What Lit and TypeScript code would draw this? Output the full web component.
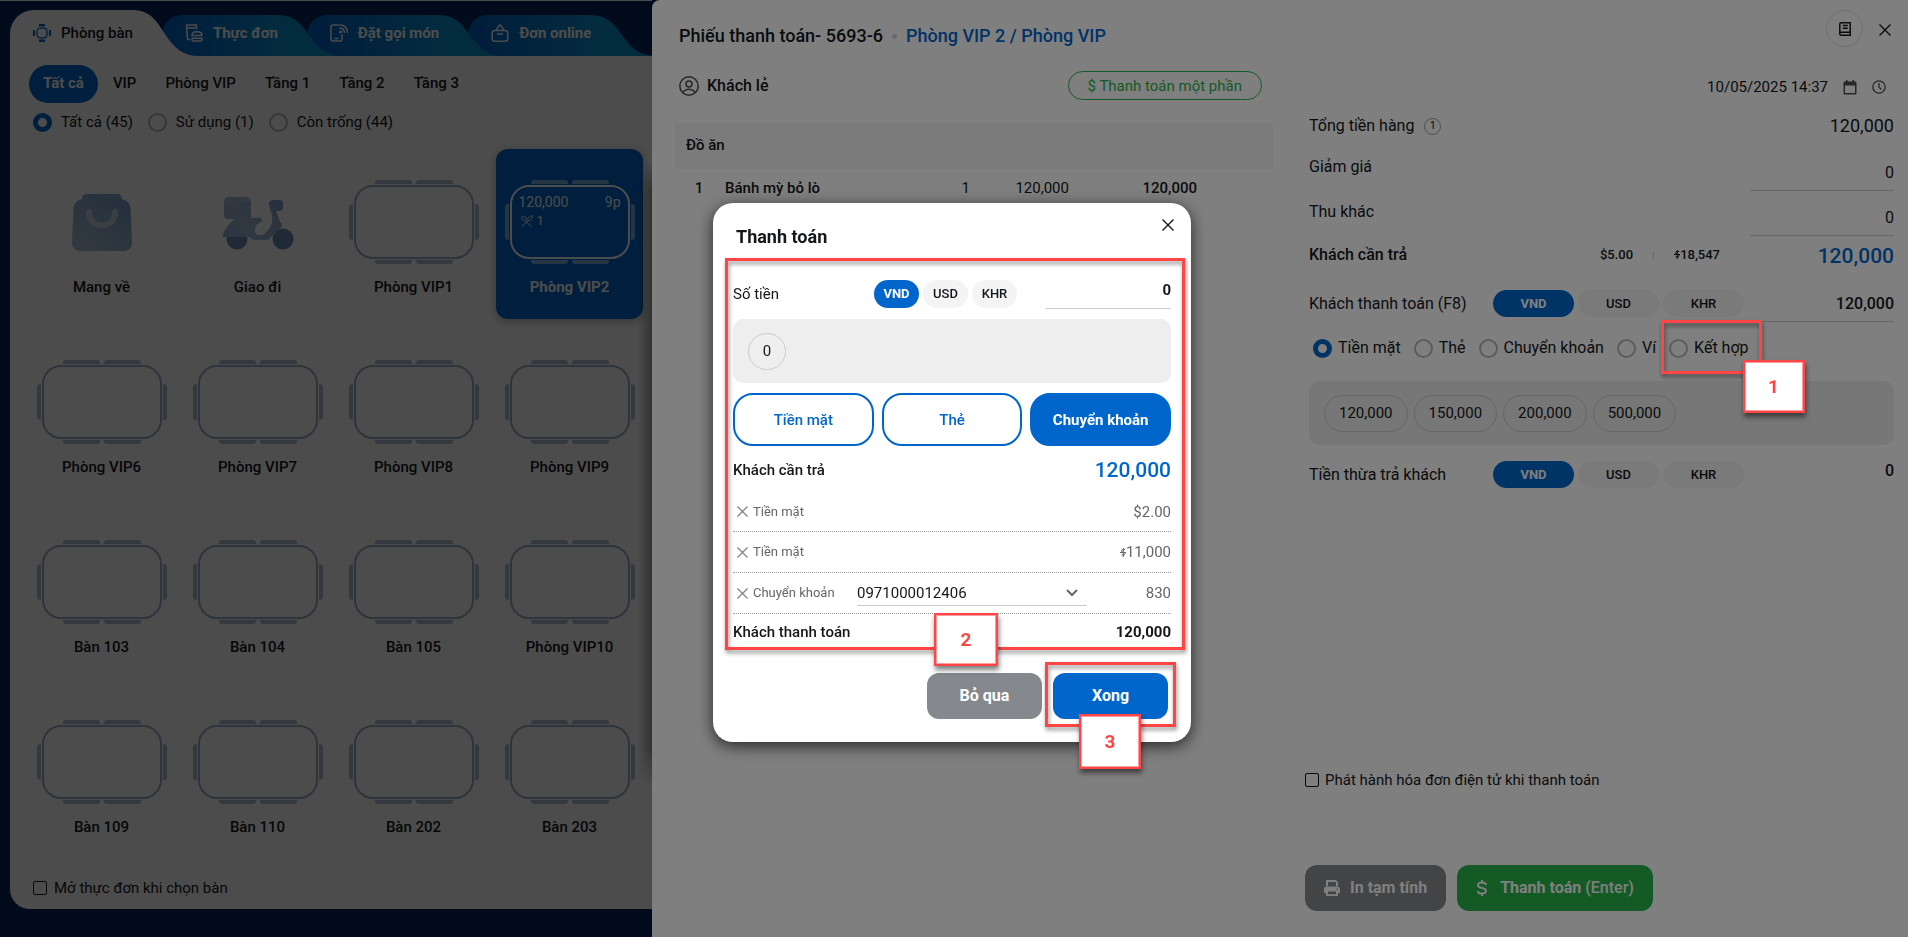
import { LitElement, html, css, svg, nothing } from "lit";
import { customElement, property, state } from "lit/decorators.js";
import { classMap } from "lit/directives/class-map.js";

const reset = css`
  *,
  *::before,
  *::after {
    box-sizing: border-box;
  }
  button,
  input,
  select {
    font: inherit;
    color: inherit;
    margin: 0;
    padding: 0;
    border: 0;
    background: none;
    border-radius: 0;
    outline: none;
  }
  button {
    cursor: pointer;
  }
  svg {
    display: block;
    flex: none;
  }
`;

const closeIcon = (size: number, stroke = 1.4) => html`
  <svg width=${size} height=${size} viewBox="0 0 12 12" fill="none" stroke="currentColor" stroke-width=${stroke}>
    <path d="M.5 .5 11.5 11.5M11.5 .5 .5 11.5" />
  </svg>
`;

const tabIcons = {
  tables: svg`<g fill="#0066cc" stroke="none"><rect x="6" y="0" width="6" height="2.500"/><rect x="6" y="15.500" width="6" height="2.500"/><rect x="0" y="6" width="2" height="6"/><rect x="16" y="6" width="2" height="6"/></g><rect x="4" y="4.100" width="10" height="9.800" rx="3.400" stroke="#0066cc" stroke-width="1.300"/>`,
  menu: svg`<path d="M4.500 15.500H2.600L1.500 4V1h10v3.500M1.500 4h8.500" /><path d="M7 11.500c0-2.500 2-3.700 5-3.700s5 1.200 5 3.700zM6.800 14.200h10.400M7 14.200v1.300c0 1 .8 1.500 1.800 1.500h6.400c1 0 1.800-.5 1.800-1.500v-1.300"/>`,
  order: svg`<path d="M8.500 1H3C1.900 1 1 1.900 1 3v12c0 1.100.9 2 2 2h7c1.100 0 2-.9 2-2v-4M5 14.500h3"/><path d="M10 1c4.400 0 7.500 3.200 7.500 7.500M10 4.200c2.600 0 4.300 1.700 4.300 4.300"/><circle cx="10.500" cy="8" r=".8"/>`,
  online: svg`<rect x="1.200" y="6.500" width="15.600" height="10.700" rx="2.500"/><path d="M5 6.500 8.200 1.500c.4-.6 1.200-.6 1.600 0L13 6.500M6.500 10h5"/>`,
};

@customElement("currency-switch")
export class CurrencySwitch extends LitElement {
  @property({ type: Boolean, reflect: true }) compact = false;
  @state() private selected = "VND";

  static styles = [
    reset,
    css`
      :host {
        display: flex;
        gap: 4px;
      }
      .unit {
        width: 81px;
        height: 27px;
        border-radius: 14px;
        background: #f4f4f4;
        color: #15171a;
        font-size: 13px;
        font-weight: 500;
        line-height: 20px;
      }
      :host([compact]) .unit {
        width: 45px;
        height: 28px;
      }
      .on {
        background: #0066cc;
        color: #fff;
        font-weight: 700;
      }
    `,
  ];

  render() {
    return ["VND", "USD", "KHR"].map(
      (unit) => html`<button
        type="button"
        class=${classMap({ unit: true, on: unit === this.selected })}
        @click=${() => (this.selected = unit)}
      >${unit}</button>`,
    );
  }
}

@customElement("table-tile")
export class TableTile extends LitElement {
  @property() name = "";
  @property() kind = "table";
  @property() amount = "";
  @property() time = "";
  @property() dishes = "";
  @property({ type: Boolean, reflect: true }) selected = false;

  static styles = [
    reset,
    css`
      :host {
        display: block;
      }
      .tile {
        display: flex;
        flex-direction: column;
        align-items: center;
        gap: 12px;
        width: 100%;
        height: 170px;
        padding-top: 31px;
        border-radius: 12px;
        font-weight: 500;
        line-height: 20px;
      }
      .seat {
        display: grid;
        width: 130px;
        height: 85px;
      }
      .seat > * {
        grid-area: 1 / 1;
      }
      .art {
        place-self: center;
      }
      .frame {
        stroke: #97adc8;
      }
      .chairs {
        fill: #adc0d6;
      }
      .info {
        display: grid;
        grid-template-columns: 1fr auto;
        align-content: start;
        padding: 12px 14px 0 14px;
        font-size: 14px;
        font-weight: 400;
        line-height: 20px;
        text-align: left;
      }
      .dishes {
        display: flex;
        align-items: center;
        gap: 4px;
        padding-left: 2px;
        font-size: 13px;
        line-height: 18px;
      }
      :host([selected]) .tile {
        background: #0066cc;
        color: #fff;
        box-shadow: 0 2px 10px rgba(0, 0, 0, 0.3);
        font-weight: 700;
      }
      :host([selected]) .frame {
        stroke: #fff;
      }
      :host([selected]) .chairs {
        fill: #7fb2e5;
      }
    `,
  ];

  private seat() {
    return html`<svg width="130" height="85" viewBox="0 0 130 85">
      <rect class="frame" x="6" y="6" width="118" height="72" rx="18" fill="none" stroke-width="2" />
      <path
        class="chairs"
        d="M26 4V3c0-2 1-3 3-3h31c2 0 3 1 3 3v1zM67 4V3c0-2 1-3 3-3h31c2 0 3 1 3 3v1zM26 80v1c0 2 1 3 3 3h31c2 0 3-1 3-3v-1zM67 80v1c0 2 1 3 3 3h31c2 0 3-1 3-3v-1zM4 24H3c-2 0-3 1-3 3v30c0 2 1 3 3 3h1zM126 24h1c2 0 3 1 3 3v30c0 2-1 3-3 3h-1z"
      />
    </svg>`;
  }

  private bag() {
    return html`<svg class="art" width="62" height="60" viewBox="0 0 62 60">
      <defs>
        <linearGradient id="bag" x1="0.3" y1="1" x2="1" y2="0.2">
          <stop offset="0" stop-color="#a5bddb" />
          <stop offset="1" stop-color="#7fa2c9" />
        </linearGradient>
      </defs>
      <path d="M11 9V6c0-4 2-5 5-5h30c3 0 5 2 5 5v3z" fill="#87aad2" />
      <path d="M13 6h36c6 0 10 4 10.500 9L61 49c.3 5-3 9-8 9H9c-5 0-8.300-4-8-9l1.500-34C3 10 7 6 13 6z" fill="url(#bag)" />
      <path d="M18 19c0 18 26 18 26 0" fill="none" stroke="#c3d2e2" stroke-width="6" stroke-linecap="round" />
    </svg>`;
  }

  private scooter() {
    return html`<svg class="art" width="72" height="54" viewBox="0 0 72 54">
      <defs>
        <linearGradient id="box" x1="0" y1="0.8" x2="1" y2="0.3">
          <stop offset="0" stop-color="#8fb0d8" />
          <stop offset="0.4" stop-color="#a3bbd9" />
          <stop offset="1" stop-color="#82a4cc" />
        </linearGradient>
      </defs>
      <circle cx="15" cy="43" r="10.500" fill="#6b8db5" />
      <circle cx="61" cy="43" r="10.500" fill="#6b8db5" />
      <path d="M2 7c0-4 2-6 5-6h17c3 0 5 2 5 6z" fill="#abc0db" />
      <path d="M2 6h27v16h9c2 0 3 3 1 4-5 2-6 5-6 8 0 4 2 5 4 5h4c8-6 10-12 9-20l-3-10c-1-3 2-5 5-5h6c2 0 3 1 3 3v5c0 2-2 3-4 3h-3l4 11c3 1 2 5 0 6L46 44H32c-2 0-3-3-5-3H1c-1-5 8-16 12-18H6c-3 0-4-2-4-4z" fill="url(#box)" />
    </svg>`;
  }

  render() {
    const art = this.kind === "bag" ? this.bag() : this.kind === "scooter" ? this.scooter() : this.seat();
    return html`<button type="button" class="tile">
      <span class="seat">
        ${art}
        ${this.amount
          ? html`<span class="info">
              <span>${this.amount}</span><span>${this.time}</span>
              <span class="dishes">
                <svg width="12" height="12" viewBox="0 0 12 12" fill="none" stroke="currentColor" stroke-width="1">
                  <path d="M1 1v2.500C1 5 2.500 5.500 3.500 5.500L10.500 11.500M2.500.8 4.500 3.200M1 11.500 7 5.500M7 5.500C6 3 8.500.8 11.300.8 11.500 3.500 9.500 6.500 7 5.500zM4.500 3.200 5.500 5" />
                </svg>
                ${this.dishes}
              </span>
            </span>`
          : nothing}
      </span>
      <span>${this.name}</span>
    </button>`;
  }
}

@customElement("app-root")
export class AppRoot extends LitElement {
  static styles = [
    reset,
    css`
      :host {
        display: block;
        font-family: Roboto, "Noto Sans", sans-serif;
        font-size: 15px;
        line-height: 20px;
        color: #15171a;
      }
      .page {
        display: grid;
        grid-template-columns: 652fr 1256fr;
        min-height: 100vh;
        background: #08275c;
      }

      /* room picker */
      .rooms {
        position: relative;
        isolation: isolate;
        display: flex;
        flex-direction: column;
        min-width: 0;
        padding: 9px 0 28px 10px;
        border-top: 1px solid #fff;
        overflow: hidden;
      }
      .tabs {
        display: flex;
        align-items: flex-end;
        height: 46px;
      }
      .tab {
        display: flex;
        height: 41px;
        margin-left: -37px;
        color: #fff;
        font-weight: 700;
      }
      .tab:first-child {
        height: 46px;
        margin-left: 0;
        color: #15171a;
        font-weight: 500;
      }
      .tab-body {
        display: flex;
        align-items: center;
        gap: 10px;
        height: 100%;
        padding: 0 0 5px 23px;
        border-radius: 20px 0 0 0;
        background: linear-gradient(90deg, #0061c4, #0c8fd0);
        white-space: nowrap;
      }
      .tab:first-child .tab-body {
        padding-bottom: 0;
        background: #fff;
        border-radius: 24px 0 0 0;
      }
      .tail {
        height: 100%;
        width: 66px;
        fill: #0c8fd0;
      }
      .tab:first-child .tail {
        fill: #fff;
      }
      .tab:nth-child(1) {
        z-index: 4;
      }
      .tab:nth-child(2) {
        z-index: 3;
      }
      .tab:nth-child(3) {
        z-index: 2;
      }
      .sheet {
        display: flex;
        flex: 1;
        flex-direction: column;
        padding: 9px 9px 0 18px;
        border-radius: 0 0 0 20px;
        background: #fff;
      }
      .areas {
        display: flex;
        gap: 1px;
        padding-left: 1px;
      }
      .area {
        height: 38px;
        padding: 0 14px 3px;
        border-radius: 19px;
        font-weight: 500;
      }
      .area.on {
        background: #0066cc;
        color: #fff;
        font-weight: 700;
      }
      .status {
        display: flex;
        gap: 15px;
        padding: 9px 5px 17px;
      }
      .status label {
        display: flex;
        align-items: center;
        gap: 9px;
      }
      .tiles {
        display: grid;
        grid-template-columns: repeat(4, 1fr);
        gap: 10px 9px;
      }
      .open-menu {
        display: flex;
        align-items: center;
        gap: 7px;
        margin-top: auto;
        padding: 18px 5px 11px;
      }
      .edge {
        position: absolute;
        top: 160px;
        right: 0;
        bottom: 150px;
        width: 14px;
        background: linear-gradient(90deg, transparent, rgba(0, 0, 0, 0.35));
        -webkit-mask: linear-gradient(transparent, #000 30px, #000 calc(100% - 40px), transparent);
        mask: linear-gradient(transparent, #000 30px, #000 calc(100% - 40px), transparent);
      }

      .radio {
        appearance: none;
        flex: none;
        width: 19px;
        height: 19px;
        border: 2px solid #b8b8b8;
        border-radius: 50%;
      }
      .radio:checked {
        border: 5px solid #0066cc;
      }
      .check {
        appearance: none;
        flex: none;
        width: 14px;
        height: 14px;
        border: 1px solid #15171a;
        border-radius: 2px;
      }

      .backdrop {
        position: fixed;
        inset: 0;
        background: rgba(0, 0, 0, 0.4);
      }

      /* payment drawer */
      .drawer {
        position: relative;
        display: flex;
        flex-direction: column;
        min-width: 0;
        padding: 10px 14px 26px 23px;
        border-radius: 8px 0 0 0;
        background: #fff;
      }
      .drawer-head {
        display: flex;
        align-items: flex-start;
        height: 37px;
        padding-left: 4px;
      }
      .drawer-title {
        display: flex;
        align-items: center;
        gap: 9px;
        margin: 0 auto 0 0;
        padding-top: 14px;
        font-size: 18px;
        font-weight: 500;
        line-height: 24px;
      }
      .drawer-title .dot {
        width: 5px;
        height: 5px;
        border-radius: 50%;
        background: #d0d0d0;
      }
      .blue {
        color: #0066cc;
      }
      .round {
        display: grid;
        place-items: center;
        width: 37px;
        height: 37px;
        border: 1px solid #e0e0e0;
        border-radius: 50%;
      }
      .drawer-close {
        display: grid;
        place-items: center;
        width: 44px;
        height: 40px;
        margin-right: -13px;
      }
      .drawer-body {
        display: grid;
        flex: 1;
        grid-template-columns: 598fr 589fr;
        gap: 32px;
        padding-top: 24px;
      }
      .customer {
        display: flex;
        align-items: center;
        gap: 8px;
        height: 29px;
        padding: 0 11px 0 4px;
        font-size: 16px;
        font-weight: 500;
      }
      .customer svg {
        color: #4b4e52;
      }
      .partial {
        height: 29px;
        margin-left: auto;
        padding: 0 19px;
        border: 1px solid #28b44b;
        border-radius: 15px;
        color: #28b44b;
        font-size: 15px;
        font-weight: 400;
      }
      .bill {
        width: 100%;
        margin-top: 23px;
        border-collapse: collapse;
        table-layout: fixed;
      }
      .bill th,
      .bill td {
        padding: 0;
        text-align: right;
        font-weight: 400;
      }
      .bill .group {
        height: 46px;
        padding: 0 11px 2px;
        background: #f6f6f6;
        text-align: left;
        font-weight: 500;
      }
      .bill .line td {
        height: 38px;
      }
      .bill .no {
        padding-right: 2px;
        text-align: center;
        font-weight: 500;
      }
      .bill .dish {
        text-align: left;
        font-weight: 500;
      }
      .bill .sum {
        font-weight: 500;
      }
      .c-no {
        width: 50px;
      }
      .c-qty {
        width: 60px;
      }
      .c-price {
        width: 99px;
      }
      .c-sum {
        width: 128px;
      }
      .c-end {
        width: 76px;
      }

      .summary {
        display: flex;
        flex-direction: column;
        font-size: 16px;
      }
      .rows {
        padding-left: 4px;
      }
      .date {
        display: flex;
        align-items: center;
        justify-content: flex-end;
        gap: 15px;
        height: 32px;
        padding-right: 8px;
        font-size: 15px;
      }
      .date input {
        width: 122px;
        text-align: right;
      }
      .date svg {
        color: #4b4e52;
      }
      .row {
        display: flex;
        align-items: flex-start;
        height: 45px;
      }
      .row > label,
      .row > .label {
        margin-right: auto;
        line-height: 42px;
      }
      .row .field {
        width: 144px;
        height: 45px;
        padding-top: 8px;
        border-bottom: 1px solid #ccc;
        text-align: right;
      }
      .row.total {
        height: 43px;
        padding-top: 3px;
        align-items: center;
      }
      .row.total .label {
        display: flex;
        align-items: center;
        gap: 10px;
        line-height: 20px;
      }
      .count {
        display: grid;
        place-items: center;
        width: 17px;
        height: 17px;
        border: 1px solid #999;
        border-radius: 50%;
        font-size: 11px;
        line-height: 12px;
      }
      .row.total output {
        font-size: 18px;
      }
      .row.due {
        height: 41px;
      }
      .row.due .label {
        line-height: 38px;
        font-weight: 500;
      }
      .foreign {
        display: flex;
        align-items: center;
        gap: 20px;
        margin-right: 30px;
        font-size: 13px;
        font-weight: 500;
        line-height: 38px;
      }
      .foreign .bar {
        width: 1px;
        height: 7px;
        background: #ccc;
      }
      .row.due .blue {
        width: 144px;
        line-height: 41px;
        text-align: right;
      }
      .big {
        font-size: 21px;
        font-weight: 500;
        line-height: 24px;
      }
      .row.pay > label,
      .row.change > label {
        width: 184px;
        margin-right: 0;
      }
      .row.pay > label {
        line-height: 53px;
      }
      .row.pay currency-switch {
        padding-top: 13px;
      }
      .row.pay .field {
        margin-left: auto;
        font-weight: 500;
      }
      .methods {
        display: flex;
        align-items: center;
        gap: 13px;
        height: 52px;
        padding-left: 4px;
      }
      .methods label {
        position: relative;
        display: flex;
        align-items: center;
        gap: 6px;
        white-space: nowrap;
      }
      .quick {
        display: flex;
        align-items: center;
        gap: 6px;
        height: 64px;
        margin-top: 7px;
        padding: 0 15px;
        border-radius: 10px;
        background: #eee;
        font-size: 15px;
      }
      .quick button {
        min-width: 38px;
        height: 37px;
        padding: 0 14px;
        border: 1px solid #ccc;
        border-radius: 19px;
      }
      .row.change {
        margin-top: 16px;
      }
      .row.change > label {
        line-height: 27px;
      }
      .row.change .zero {
        margin-left: auto;
        font-weight: 500;
      }
      .einvoice {
        display: flex;
        align-items: center;
        gap: 6px;
        margin-top: auto;
        margin-bottom: 75px;
        font-size: 15px;
      }
      .actions {
        display: flex;
        gap: 11px;
      }
      .btn {
        display: flex;
        align-items: center;
        justify-content: center;
        gap: 10px;
        height: 46px;
        padding: 0 19px;
        border-radius: 12px;
        background: #85888c;
        color: #fff;
        font-size: 16px;
        font-weight: 700;
      }
      .btn.go {
        gap: 12px;
        background: #28b44b;
      }
      .btn .key {
        font-weight: 500;
      }
      .riel {
        display: inline-block;
        width: 6px;
        height: 9px;
      }

      /* combined payment dialog */
      .layer {
        position: fixed;
        inset: 0;
        z-index: 10;
        display: grid;
        place-items: center;
        padding: 8px 4px 0 0;
        background: rgba(0, 0, 0, 0.5);
      }
      .dialog {
        width: min(478px, 100%);
        padding: 16px 20px 23px;
        border-radius: 20px;
        background: #fff;
        box-shadow: 0 4px 16px rgba(0, 0, 0, 0.7);
      }
      .dialog-head {
        display: flex;
        align-items: flex-start;
        justify-content: space-between;
        height: 44px;
        padding-left: 3px;
      }
      .dialog-head h2 {
        margin: 0;
        padding-top: 6px;
        font-size: 18px;
        font-weight: 700;
        line-height: 24px;
      }
      .dialog-head button {
        padding-left: 8px;
        margin-right: -3px;
      }
      .split {
        position: relative;
        padding-top: 17px;
      }
      .line-amount {
        display: flex;
        align-items: flex-start;
      }
      .line-amount label {
        width: 141px;
        line-height: 28px;
      }
      .line-amount .field {
        width: 125px;
        height: 29px;
        margin-left: auto;
        padding-bottom: 8px;
        border-bottom: 1px solid #ccc;
        text-align: right;
        font-weight: 700;
      }
      .split .quick {
        margin-top: 10px;
      }
      .split .quick button {
        padding: 0;
      }
      .ways {
        display: grid;
        grid-template-columns: repeat(3, 1fr);
        gap: 8px;
        margin-top: 10px;
      }
      .way {
        height: 53px;
        border: 2px solid #0066cc;
        border-radius: 20px;
        color: #0066cc;
        font-weight: 500;
      }
      .way.on {
        background: #0066cc;
        color: #fff;
        font-weight: 700;
      }
      .pair {
        display: flex;
        align-items: center;
        justify-content: space-between;
        font-weight: 500;
      }
      .pair.need {
        height: 46px;
        padding-top: 2px;
      }
      .pair.paid {
        height: 35px;
      }
      .pair strong {
        font-weight: 700;
      }
      .entry {
        display: grid;
        grid-template-columns: 124px 230px 1fr;
        align-items: center;
        height: 40px;
        border-bottom: 1px dotted #999;
        color: #63666a;
      }
      .entry + .entry {
        height: 41px;
      }
      .entry output {
        grid-column: 3;
        text-align: right;
      }
      .entry .what {
        display: flex;
        align-items: center;
        gap: 5px;
        padding-left: 4px;
        font-size: 13px;
        white-space: nowrap;
      }
      .entry .what button {
        color: #85888c;
      }
      .account {
        display: grid;
        align-items: center;
        height: 25px;
        border-bottom: 1px solid #ccc;
        color: #15171a;
      }
      .account > * {
        grid-area: 1 / 1;
      }
      .account select {
        appearance: none;
        width: 100%;
        height: 24px;
      }
      .account svg {
        justify-self: end;
        margin-right: 9px;
        color: #63666a;
        pointer-events: none;
      }
      .dialog-foot {
        display: flex;
        justify-content: flex-end;
        gap: 11px;
        padding: 24px 3px 0 0;
      }
      .dialog-foot .btn {
        width: 115px;
      }
      .anchor {
        position: relative;
      }
      .btn.done {
        background: #0066cc;
      }

      /* step markers */
      .frame-mark {
        position: absolute;
        z-index: 20;
        border: 3px solid #ff4545;
        filter: drop-shadow(1px 3px 2px rgba(0, 0, 0, 0.45));
        pointer-events: none;
      }
      .step {
        position: absolute;
        z-index: 21;
        display: grid;
        place-items: center;
        width: 62px;
        height: 53px;
        border: 2px solid #ff4545;
        background: #fff;
        box-shadow:
          inset 0 0 0 1px #ff9c9c,
          1px 4px 5px rgba(0, 0, 0, 0.5);
        color: #ff4545;
        font-size: 19px;
        font-weight: 700;
        pointer-events: none;
      }
      .mark-method {
        inset: -18px -13px -16px -8px;
      }
      .step-method {
        top: 22px;
        right: -56px;
      }
      .mark-split {
        inset: -5px -14px -1px -8px;
      }
      .step-split {
        bottom: -17px;
        left: 201px;
        width: 64px;
      }
      .mark-done {
        inset: -11px -8px -8px -8px;
      }
      .step-done {
        top: 41px;
        left: 26px;
        height: 55px;
      }
    `,
  ];

  private tab(icon: keyof typeof tabIcons, text: string) {
    return html`<button type="button" class="tab">
      <span class="tab-body">
        <svg width="18" height="18" viewBox="0 0 18 18" fill="none" stroke="currentColor" stroke-width="1.5" stroke-linejoin="round" stroke-linecap="round">${tabIcons[icon]}</svg>
        <span>${text}</span>
      </span>
      <svg class="tail" viewBox="0 0 66 46" preserveAspectRatio="none">
        <path d="M-1 0C18 0 24 12 32 24 41 38 50 46 66 46H-1z" />
      </svg>
    </button>`;
  }

  private riel() {
    return html`<svg class="riel" viewBox="0 0 6 9" fill="none" stroke="currentColor" stroke-width="1" role="img" aria-label="៛">
      <path d="M5 1.500H2.500L1.500 3l1 1.200h1.500l1 1.300L4 7H1.500M0 4.500h6M3.300 0v9" />
    </svg>`;
  }

  private entry(what: string, amount: unknown, account?: string) {
    return html`<div class="entry">
      <span class="what"><button type="button" aria-label="Xóa">${closeIcon(11, 1.5)}</button>${what}</span>
      ${account
        ? html`<span class="account">
            <select aria-label="Tài khoản"><option>${account}</option></select>
            <svg width="12" height="8" viewBox="0 0 12 8" fill="none" stroke="currentColor" stroke-width="2"><path d="M1 1l5 5 5-5" /></svg>
          </span>`
        : nothing}
      <output>${amount}</output>
    </div>`;
  }

  private renderRooms() {
    const areas = ["Tất cả", "VIP", "Phòng VIP", "Tầng 1", "Tầng 2", "Tầng 3"];
    const states = ["Tất cả (45)", "Sử dụng (1)", "Còn trống (44)"];
    const tables = [
      "Phòng VIP6", "Phòng VIP7", "Phòng VIP8", "Phòng VIP9",
      "Bàn 103", "Bàn 104", "Bàn 105", "Phòng VIP10",
      "Bàn 109", "Bàn 110", "Bàn 202", "Bàn 203",
    ];
    return html`<section class="rooms">
      <nav class="tabs">
        ${this.tab("tables", "Phòng bàn")} ${this.tab("menu", "Thực đơn")}
        ${this.tab("order", "Đặt gọi món")} ${this.tab("online", "Đơn online")}
      </nav>
      <div class="sheet">
        <div class="areas">
          ${areas.map((a, i) => html`<button type="button" class=${classMap({ area: true, on: i === 0 })}>${a}</button>`)}
        </div>
        <div class="status">
          ${states.map((s, i) => html`<label><input class="radio" type="radio" name="status" ?checked=${i === 0} />${s}</label>`)}
        </div>
        <div class="tiles">
          <table-tile kind="bag" name="Mang về"></table-tile>
          <table-tile kind="scooter" name="Giao đi"></table-tile>
          <table-tile name="Phòng VIP1"></table-tile>
          <table-tile name="Phòng VIP2" amount="120,000" time="9p" dishes="1" selected></table-tile>
          ${tables.map((t) => html`<table-tile name=${t}></table-tile>`)}
        </div>
        <label class="open-menu"><input class="check" type="checkbox" />Mở thực đơn khi chọn bàn</label>
      </div>
      <div class="edge"></div>
    </section>`;
  }

  private renderDrawer() {
    const methods = ["Tiền mặt", "Thẻ", "Chuyển khoản", "Ví", "Kết hợp"];
    return html`<section class="drawer">
      <header class="drawer-head">
        <h1 class="drawer-title">
          <span>Phiếu thanh toán- 5693-6</span><span class="dot"></span><span class="blue">Phòng VIP 2 / Phòng VIP</span>
        </h1>
        <button type="button" class="round" aria-label="Ghi chú">
          <svg width="14" height="14" viewBox="0 0 14 14" fill="none" stroke="currentColor" stroke-width="1.5">
            <path d="M1.800 11.500V2.200C1.800 1.300 2.400.8 3.200.8h9v9.400H3c-.8 0-1.300.6-1.300 1.400 0 .9.500 1.600 1.300 1.600h9.200v-3M4.800 3.500h5M4.800 6.200h5" />
          </svg>
        </button>
        <button type="button" class="drawer-close" aria-label="Đóng">${closeIcon(12)}</button>
      </header>
      <div class="drawer-body">
        <div>
          <div class="customer">
            <svg width="20" height="20" viewBox="0 0 20 20" fill="none" stroke="currentColor" stroke-width="1.5">
              <circle cx="10" cy="10" r="9.200" />
              <circle cx="10" cy="8" r="3" />
              <path d="M4 16.500c1.300-2.200 3.400-3.200 6-3.200s4.700 1 6 3.200" />
            </svg>
            <span>Khách lẻ</span>
            <button type="button" class="partial">$ Thanh toán một phần</button>
          </div>
          <table class="bill">
            <colgroup>
              <col class="c-no" /><col /><col class="c-qty" /><col class="c-price" /><col class="c-sum" /><col class="c-end" />
            </colgroup>
            <thead>
              <tr><th class="group" colspan="6">Đồ ăn</th></tr>
            </thead>
            <tbody>
              <tr class="line">
                <td class="no">1</td><td class="dish">Bánh mỳ bỏ lò</td><td>1</td><td>120,000</td><td class="sum">120,000</td><td></td>
              </tr>
            </tbody>
          </table>
        </div>
        <div class="summary">
          <div class="rows">
            <div class="date">
              <input aria-label="Thời gian" value="10/05/2025 14:37" />
              <svg width="14" height="15" viewBox="0 0 14 15" fill="currentColor"><path d="M3 0h1.500v1.500h5V0H11v1.500h1c1 0 1.500.6 1.500 1.500v10c0 1-.6 1.500-1.500 1.500H2C1 14.500.5 14 .5 13V3c0-1 .6-1.500 1.500-1.500h1zM2 5.500V13h10V5.500z" fill-rule="evenodd" /></svg>
              <svg width="14" height="14" viewBox="0 0 14 14" fill="none" stroke="currentColor" stroke-width="1.300"><circle cx="7" cy="7" r="6.200" /><path d="M7 3v4.200L9.500 9.500" /></svg>
            </div>
            <div class="row total">
              <span class="label">Tổng tiền hàng <span class="count">1</span></span><output>120,000</output>
            </div>
            <div class="row"><label for="discount">Giảm giá</label><input id="discount" class="field" value="0" /></div>
            <div class="row"><label for="surcharge">Thu khác</label><input id="surcharge" class="field" value="0" /></div>
            <div class="row due">
              <span class="label">Khách cần trả</span>
              <span class="foreign"><span>$5.00</span><span class="bar"></span><span>${this.riel()}18,547</span></span>
              <output class="big blue">120,000</output>
            </div>
            <div class="row pay">
              <label for="paid">Khách thanh toán (F8)</label>
              <currency-switch></currency-switch>
              <input id="paid" class="field" value="120,000" />
            </div>
            <div class="methods">
              ${methods.map(
                (m, i) => html`<label>
                  <input class="radio" type="radio" name="method" ?checked=${i === 0} />${m}
                  ${i === methods.length - 1
                    ? html`<span class="frame-mark mark-method"></span><span class="step step-method">1</span>`
                    : nothing}
                </label>`,
              )}
            </div>
            <div class="quick">
              ${["120,000", "150,000", "200,000", "500,000"].map((q) => html`<button type="button">${q}</button>`)}
            </div>
            <div class="row change">
              <label for="change">Tiền thừa trả khách</label>
              <currency-switch></currency-switch>
              <output id="change" class="zero">0</output>
            </div>
          </div>
          <label class="einvoice"><input class="check" type="checkbox" />Phát hành hóa đơn điện tử khi thanh toán</label>
          <div class="actions">
            <button type="button" class="btn">
              <svg width="16" height="16" viewBox="0 0 16 16">
                <path d="M3 6V1h8.500L13 2.500V6" fill="none" stroke="currentColor" stroke-width="2" />
                <path d="M2.500 6.500h11c1.500 0 2.500 1 2.500 2.500v4h-2v3H2v-3H0V9c0-1.500 1-2.500 2.500-2.500z" fill="currentColor" />
                <path d="M4 11.500h8v2.700H4z" fill="#85888c" />
                <circle cx="13.300" cy="9.200" r=".8" fill="#85888c" />
              </svg>
              In tạm tính
            </button>
            <button type="button" class="btn go">
              <svg width="12" height="16" viewBox="0 0 12 16" fill="none" stroke="currentColor" stroke-width="2"><path d="M10 5C10 3.300 8.500 2.500 6 2.500S2 3.500 2 5.200C2 9 10 7 10 10.800c0 1.800-1.600 2.700-4 2.700s-4-.9-4-2.600M6 0v2.500M6 13.500V16" /></svg>
              <span>Thanh toán <span class="key">(Enter)</span></span>
            </button>
          </div>
        </div>
      </div>
    </section>`;
  }

  private renderDialog() {
    return html`<div class="layer">
      <div class="dialog" role="dialog" aria-labelledby="dialog-title">
        <header class="dialog-head">
          <h2 id="dialog-title">Thanh toán</h2>
          <button type="button" aria-label="Đóng">${closeIcon(12)}</button>
        </header>
        <div class="split">
          <div class="line-amount">
            <label for="amount">Số tiền</label>
            <currency-switch compact></currency-switch>
            <input id="amount" class="field" value="0" />
          </div>
          <div class="quick"><button type="button">0</button></div>
          <div class="ways">
            <button type="button" class="way">Tiền mặt</button>
            <button type="button" class="way">Thẻ</button>
            <button type="button" class="way on">Chuyển khoản</button>
          </div>
          <div class="pair need"><span>Khách cần trả</span><output class="big blue">120,000</output></div>
          ${this.entry("Tiền mặt", "$2.00")} ${this.entry("Tiền mặt", html`${this.riel()}11,000`)}
          ${this.entry("Chuyển khoản", "830", "0971000012406")}
          <div class="pair paid"><span>Khách thanh toán</span><strong>120,000</strong></div>
          <span class="frame-mark mark-split"></span>
          <span class="step step-split">2</span>
        </div>
        <footer class="dialog-foot">
          <button type="button" class="btn">Bỏ qua</button>
          <div class="anchor">
            <button type="button" class="btn done">Xong</button>
            <span class="frame-mark mark-done"></span>
            <span class="step step-done">3</span>
          </div>
        </footer>
      </div>
    </div>`;
  }

  render() {
    return html`<main class="page">
        ${this.renderRooms()}
        <div class="backdrop"></div>
        ${this.renderDrawer()}
      </main>
      ${this.renderDialog()}`;
  }
}
